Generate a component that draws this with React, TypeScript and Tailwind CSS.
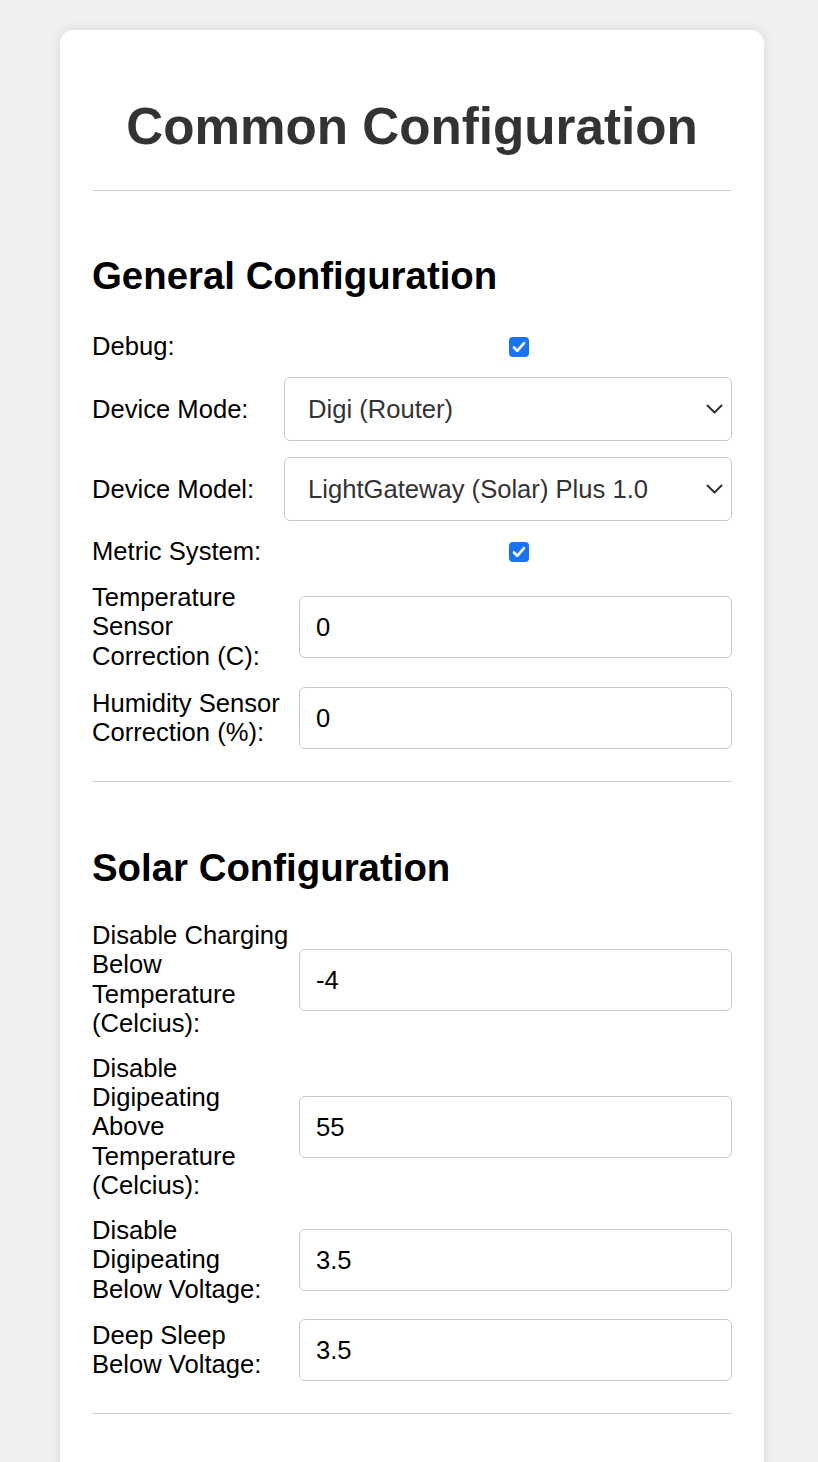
import React from "react";

const font = { fontFamily: '"Liberation Sans", Arial, sans-serif' };

const Chevron = () => (
  <svg width="17" height="10" viewBox="0 0 17 10" fill="none" className="shrink-0">
    <polyline points="1.5,1.5 8.5,8.5 15.5,1.5" stroke="#333" strokeWidth="2" strokeLinecap="round" strokeLinejoin="round" />
  </svg>
);

const Check = () => (
  <div className="flex h-[20px] w-[20px] items-center justify-center rounded-[4px] bg-[#1a73f0]">
    <svg width="14" height="12" viewBox="0 0 14 12" fill="none">
      <polyline points="2,6.5 5.3,9.8 12,2.2" stroke="white" strokeWidth="2.6" strokeLinecap="round" strokeLinejoin="round" />
    </svg>
  </div>
);

const CheckRow = ({ label }: { label: string }) => (
  <div className="flex items-center">
    <div className="w-[206px] shrink-0 text-[25.6px] leading-[29.4px] text-black">{label}</div>
    <div className="ml-[8px] flex flex-1 justify-center">
      <Check />
    </div>
  </div>
);

const SelectRow = ({ label, value }: { label: string; value: string }) => (
  <div className="flex items-center">
    <div className="w-[184px] shrink-0 text-[25.6px] leading-[29.4px] text-black">{label}</div>
    <div className="ml-[8px] flex h-[64px] flex-1 items-center justify-between rounded-[6px] border border-[#c9c9c9] bg-white pl-[23px] pr-[8px]">
      <span className="text-[25.6px] text-[#333]">{value}</span>
      <Chevron />
    </div>
  </div>
);

const InputRow = ({ label, value }: { label: string; value: string }) => (
  <div className="flex items-center">
    <div className="w-[199px] shrink-0 text-[25.6px] leading-[29.4px] text-black">{label}</div>
    <div className="ml-[8px] flex h-[62px] flex-1 items-center rounded-[6px] border border-[#c9c9c9] bg-white pl-[16px]">
      <span className="text-[25.6px] text-black">{value}</span>
    </div>
  </div>
);

const Divider = () => <div className="h-px bg-[#d0d0d0]" />;

export default function App() {
  return (
    <div className="min-h-screen bg-[#f0f0f0] pt-[30px]" style={font}>
      <div className="ml-[60px] w-[704px] rounded-[13px] bg-white px-[32px] pb-[120px] pt-[32px] shadow-[0_0_12px_rgba(0,0,0,0.1)]">
        <h1 className="mb-[34px] mt-[35px] text-center text-[51.2px] font-bold leading-[59px] text-[#333]">
          Common Configuration
        </h1>
        <Divider />

        <div className="pb-[32px] pt-[63px]">
          <h2 className="mb-[34px] text-[38.4px] font-bold leading-[44px] text-black">General Configuration</h2>
          <div className="flex flex-col gap-[16px]">
            <CheckRow label="Debug:" />
            <SelectRow label="Device Mode:" value="Digi (Router)" />
            <SelectRow label="Device Model:" value="LightGateway (Solar) Plus 1.0" />
            <CheckRow label="Metric System:" />
            <InputRow label="Temperature Sensor Correction (C):" value="0" />
            <InputRow label="Humidity Sensor Correction (%):" value="0" />
          </div>
        </div>
        <Divider />

        <div className="pb-[32px] pt-[64px]">
          <h2 className="mb-[31px] text-[38.4px] font-bold leading-[44px] text-black">Solar Configuration</h2>
          <div className="flex flex-col gap-[15px]">
            <InputRow label="Disable Charging Below Temperature (Celcius):" value="-4" />
            <InputRow label="Disable Digipeating Above Temperature (Celcius):" value="55" />
            <InputRow label="Disable Digipeating Below Voltage:" value="3.5" />
            <InputRow label="Deep Sleep Below Voltage:" value="3.5" />
          </div>
        </div>
        <Divider />
      </div>
    </div>
  );
}
